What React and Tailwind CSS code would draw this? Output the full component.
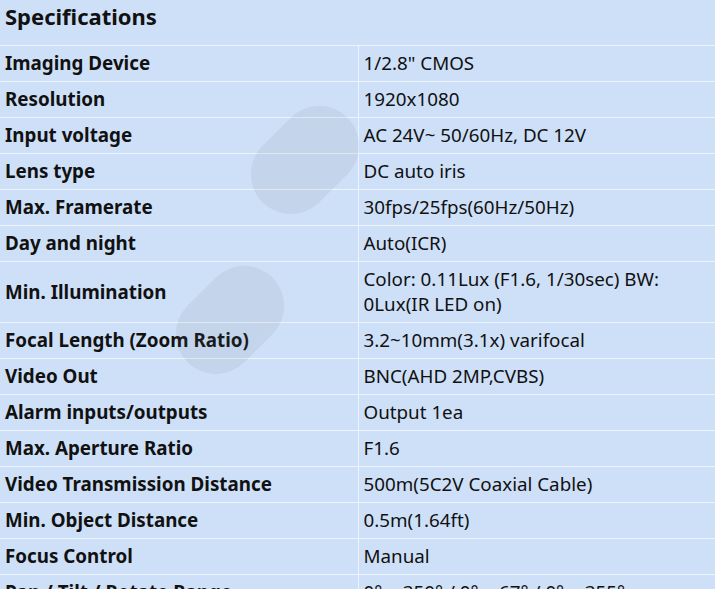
const specs = [
  ["Imaging Device", "1/2.8\" CMOS"],
  ["Resolution", "1920x1080"],
  ["Input voltage", "AC 24V~ 50/60Hz, DC 12V"],
  ["Lens type", "DC auto iris"],
  ["Max. Framerate", "30fps/25fps(60Hz/50Hz)"],
  ["Day and night", "Auto(ICR)"],
  ["Min. Illumination", "Color: 0.11Lux (F1.6, 1/30sec) BW: 0Lux(IR LED on)"],
  ["Focal Length (Zoom Ratio)", "3.2~10mm(3.1x) varifocal"],
  ["Video Out", "BNC(AHD 2MP,CVBS)"],
  ["Alarm inputs/outputs", "Output 1ea"],
  ["Max. Aperture Ratio", "F1.6"],
  ["Video Transmission Distance", "500m(5C2V Coaxial Cable)"],
  ["Min. Object Distance", "0.5m(1.64ft)"],
  ["Focus Control", "Manual"],
  ["Pan / Tilt / Rotate Range", "0° ~ 350° / 0° ~ 67° / 0° ~ 355°"],
]

export default function App() {
  return (
    <div className="w-[715px] h-[589px] overflow-hidden bg-[#cee0f8] text-[#111] relative" style={{ fontFamily: '"Noto Sans", "Open Sans", sans-serif' }}>
      <div className="h-[46px] px-[5px] pt-[1px] text-[22px] font-bold leading-[30px] border-b border-[#eef4fd]">
        Specifications
      </div>
      <table className="w-full border-collapse text-[18.8px] leading-[25px]">
        <tbody>
          {specs.map(([k, v]) => (
            <tr key={k} className="border-b border-[#eef4fd]">
              <td className="w-[358px] px-[5px] py-[5px] font-bold border-r border-[#eef4fd] align-middle">{k}</td>
              <td className="px-[5px] py-[5px] pr-[40px] align-middle">{v}</td>
            </tr>
          ))}
        </tbody>
      </table>

      {/* watermark */}
      <div className="absolute inset-0 pointer-events-none">
        <div className="absolute left-[245px] top-[120px] w-[120px] h-[80px] rounded-full bg-[#6b7280]/10 -rotate-45"></div>
        <div className="absolute left-[170px] top-[280px] w-[120px] h-[80px] rounded-full bg-[#6b7280]/10 -rotate-45"></div>
      </div>
    </div>
  )
}
